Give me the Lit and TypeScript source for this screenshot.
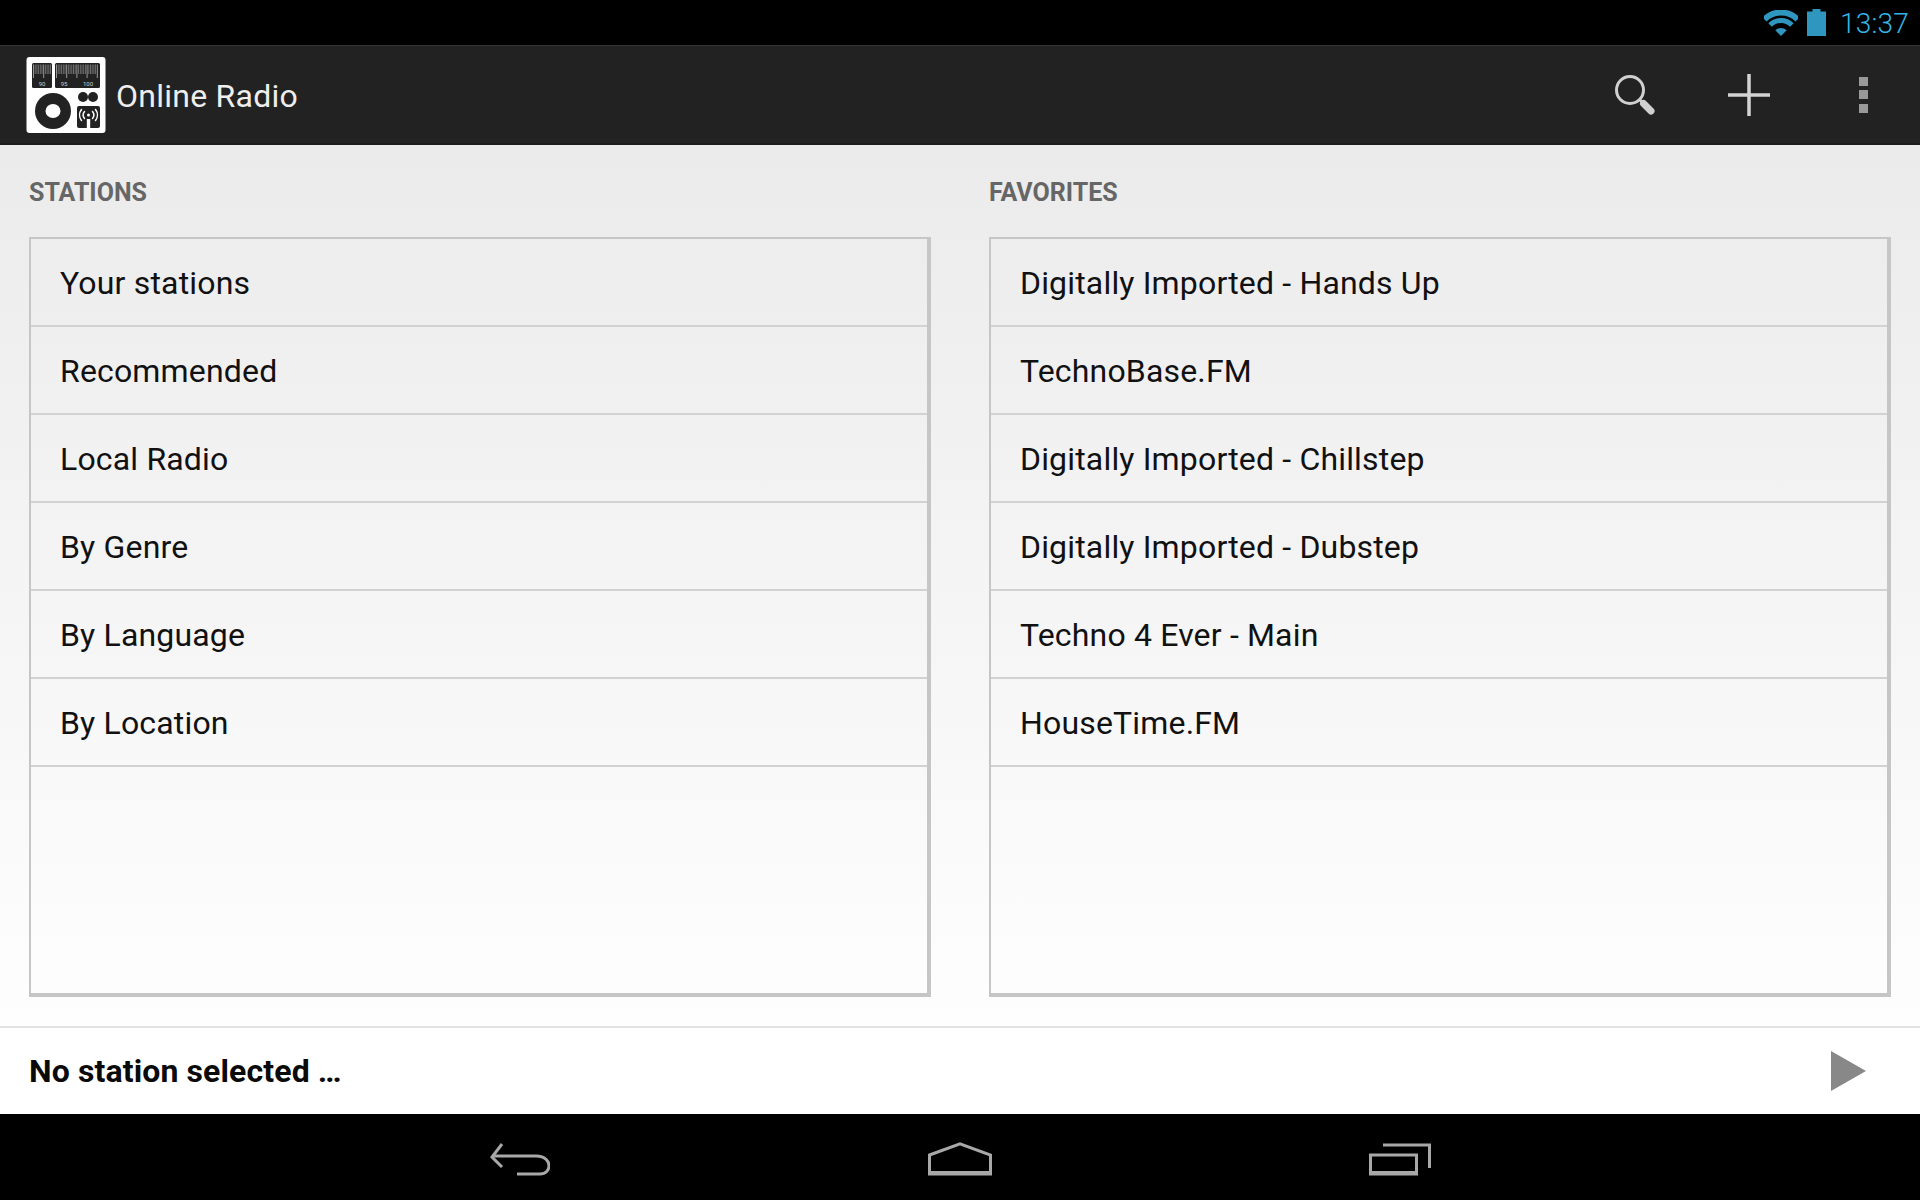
import { LitElement, html, css, svg } from "lit";
import { customElement } from "lit/decorators.js";

const stations = ["Your stations", "Recommended", "Local Radio", "By Genre", "By Language", "By Location"];
const favorites = [
  "Digitally Imported - Hands Up",
  "TechnoBase.FM",
  "Digitally Imported - Chillstep",
  "Digitally Imported - Dubstep",
  "Techno 4 Ever - Main",
  "HouseTime.FM",
];

function ticks(x0: number, x1: number) {
  const out = [];
  for (let x = x0, i = 0; x <= x1; x += 1.7, i++) {
    const long = i % 6 === 0;
    out.push(svg`<line x1=${x} x2=${x} y1="7.5" y2=${long ? 21 : 17} stroke="#ccc" stroke-width="0.7" opacity=${long ? 1 : 0.65}></line>`);
  }
  return out;
}

const logo = html`<svg class="logo" width="80" height="76" viewBox="0 0 80 76">
  <rect x="0.5" y="0" width="79" height="76" rx="3" fill="#fff"></rect>
  <rect x="6" y="6" width="20" height="25" rx="1.5" fill="#222"></rect>
  <rect x="29" y="6" width="45" height="25" rx="1.5" fill="#222"></rect>
  ${ticks(7.5, 25)}${ticks(30.5, 73)}
  <g class="num">
    <text x="16" y="28.5" text-anchor="middle">90</text>
    <text x="38" y="28.5" text-anchor="middle">95</text>
    <text x="62" y="28.5" text-anchor="middle">100</text>
  </g>
  <circle cx="27" cy="54" r="18" fill="#222"></circle>
  <ellipse cx="27" cy="54" rx="7.5" ry="7" fill="#fff"></ellipse>
  <circle cx="57" cy="40" r="5" fill="#222"></circle>
  <circle cx="67" cy="40" r="5" fill="#222"></circle>
  <rect x="51" y="49" width="23" height="22" rx="2" fill="#222"></rect>
  <g fill="none" stroke="#fff" stroke-width="1.5" stroke-linecap="round">
    <path d="M58.5 54.5a5.5 5.5 0 0 0 0 7"></path>
    <path d="M66.5 54.5a5.5 5.5 0 0 1 0 7"></path>
    <path d="M55.5 52.5a9 9 0 0 0 0 11"></path>
    <path d="M69.5 52.5a9 9 0 0 1 0 11"></path>
  </g>
  <circle cx="62.5" cy="58" r="1.5" fill="#fff"></circle>
  <rect x="60.8" y="62" width="3.4" height="9" fill="#fff"></rect>
</svg>`;

@customElement("app-root")
export class AppRoot extends LitElement {
  static styles = css`
    :host {
      display: flex;
      flex-direction: column;
      width: 1920px;
      height: 1200px;
      overflow: hidden;
      font-family: Roboto, "Liberation Sans", sans-serif;
      background: #fff;
    }
    .status {
      height: 45px;
      background: #000;
      display: flex;
      align-items: center;
      justify-content: flex-end;
      padding-right: 11px;
      box-sizing: border-box;
    }
    .wifi { margin-right: 9px; }
    .battery { margin-right: 14px; }
    .time {
      font-size: 28px;
      font-weight: 300;
      letter-spacing: 0.2px;
      color: #33b5e5;
      line-height: 45px;
      padding-top: 1px;
    }
    .bar {
      height: 100px;
      box-sizing: border-box;
      background: #222;
      border-top: 1px solid #333;
      border-bottom: 2px solid #1c1c1c;
      display: flex;
      align-items: center;
      padding-left: 26px;
    }
    .logo { flex: none; }
    .num { font-size: 6px; fill: #ccc; font-family: Roboto, sans-serif; }
    .title {
      color: #eee;
      font-size: 32px;
      letter-spacing: 0.25px;
      margin-left: 10px;
      flex: 1;
      line-height: 40px;
      padding-top: 2px;
    }
    .action {
      width: 114px;
      height: 100%;
      display: flex;
      align-items: center;
      justify-content: center;
    }
    main {
      flex: 1;
      min-height: 0;
      box-sizing: border-box;
      background: linear-gradient(#ebebeb, #fefefe);
      padding: 0 29px 29px;
      display: grid;
      grid-template-columns: 902px 902px;
      column-gap: 58px;
    }
    section { display: flex; flex-direction: column; min-height: 0; }
    h2 {
      margin: 0;
      height: 92px;
      box-sizing: border-box;
      padding-top: 33px;
      font-size: 25px;
      line-height: 30px;
      font-weight: 700;
      color: #666;
    }
    .list {
      flex: 1;
      min-height: 0;
      border-top: 2px solid #c6c6c6;
      border-left: 2px solid #c6c6c6;
      border-right: 4px solid #c6c6c6;
      border-bottom: 4px solid #c6c6c6;
    }
    .row {
      height: 86px;
      box-sizing: content-box;
      border-bottom: 2px solid #d2d2d2;
      display: flex;
      align-items: center;
      padding-left: 29px;
      font-size: 32px;
      letter-spacing: 0.17px;
      color: #111;
    }
    .row span { padding-top: 2px; }
    footer {
      height: 88px;
      box-sizing: border-box;
      border-top: 2px solid #e2e2e2;
      background: #fff;
      display: flex;
      align-items: center;
      justify-content: space-between;
      padding: 0 54px 0 29px;
    }
    .now { font-size: 32px; font-weight: 700; color: #0a0a0a; letter-spacing: 0.12px; }
    nav {
      height: 86px;
      background: #000;
      display: flex;
      justify-content: center;
      padding-top: 28px;
      box-sizing: border-box;
      column-gap: 240px;
    }
    .key { width: 200px; display: flex; justify-content: center; align-items: flex-start; }
    svg { display: block; }
  `;

  private list(items: string[]) {
    return html`<div class="list">${items.map((t) => html`<div class="row"><span>${t}</span></div>`)}</div>`;
  }

  render() {
    return html`
      <div class="status">
        <svg class="wifi" width="34" height="26" viewBox="0 0 34 26" fill="none" stroke="#2f96bf">
          <path d="M0.4 9.4A23.5 23.5 0 0 1 33.6 9.4" stroke-width="6"></path>
          <path d="M6.1 15.1A15.4 15.4 0 0 1 27.9 15.1" stroke-width="5"></path>
          <path d="M11.3 20.3L17 26L22.7 20.3A8 8 0 0 0 11.3 20.3Z" fill="#2f96bf" stroke="none"></path>
        </svg>
        <svg class="battery" width="19" height="27" viewBox="0 0 19 27">
          <path d="M5.5 0h8v2.5h5.5V27H0V2.5h5.5z" fill="#2f96bf"></path>
        </svg>
        <span class="time">13:37</span>
      </div>
      <div class="bar">
        ${logo}
        <span class="title">Online Radio</span>
        <div class="action">
          <svg width="44" height="44" viewBox="0 0 44 44" fill="none">
            <circle cx="17" cy="17" r="13.5" stroke="#d0d0d0" stroke-width="3"></circle>
            <path d="M27 27L30 30" stroke="#d0d0d0" stroke-width="3"></path>
            <path d="M30.5 30.5L38 38" stroke="#d0d0d0" stroke-width="7" stroke-linecap="round"></path>
          </svg>
        </div>
        <div class="action">
          <svg width="42" height="42" viewBox="0 0 42 42" fill="#d4d4d4">
            <rect x="19.25" y="0" width="3.5" height="42"></rect>
            <rect x="0" y="19.25" width="42" height="3.5"></rect>
          </svg>
        </div>
        <div class="action">
          <svg width="9" height="36" viewBox="0 0 9 36" fill="#999">
            <rect width="9" height="9"></rect>
            <rect y="13" width="9" height="9"></rect>
            <rect y="27" width="9" height="9"></rect>
          </svg>
        </div>
      </div>
      <main>
        <section><h2>STATIONS</h2>${this.list(stations)}</section>
        <section><h2>FAVORITES</h2>${this.list(favorites)}</section>
      </main>
      <footer>
        <span class="now">No station selected …</span>
        <svg width="35" height="40" viewBox="0 0 35 40"><path d="M0 0L35 20L0 40Z" fill="#888"></path></svg>
      </footer>
      <nav>
        <div class="key">
          <svg width="60" height="34" viewBox="0 0 60 34" fill="none" stroke="#a8a8a8" stroke-width="3">
            <path d="M12 2L2 15L12 25"></path>
            <path d="M2 14H46C56 14 59 20 59 24C59 28 56 32 50 32H27"></path>
          </svg>
        </div>
        <div class="key">
          <svg width="64" height="34" viewBox="0 0 64 34" fill="none" stroke="#a8a8a8" stroke-width="3">
            <path d="M1.5 13L32 1.8L62.5 13V32H1.5Z"></path>
            <path d="M1.5 31H62.5" stroke-width="4"></path>
          </svg>
        </div>
        <div class="key">
          <svg width="62" height="34" viewBox="0 0 62 34" fill="none" stroke="#a8a8a8" stroke-width="3">
            <path d="M14 3H60.5V26"></path>
            <path d="M1.5 13H47.5V32H1.5Z"></path>
            <path d="M1.5 31H47.5" stroke-width="4"></path>
          </svg>
        </div>
      </nav>
    `;
  }
}
